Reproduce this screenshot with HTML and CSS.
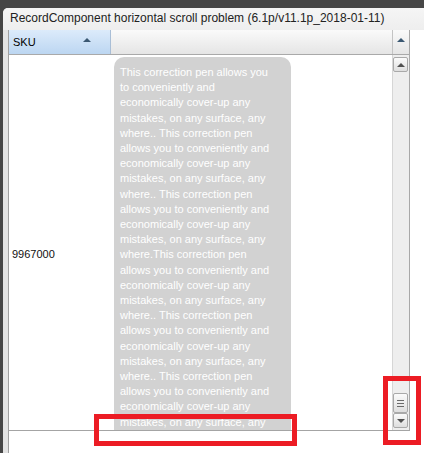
FILE: index.html
```html
<!DOCTYPE html>
<html>
<head>
<meta charset="utf-8">
<link rel="stylesheet" href="styles.css">
</head>
<body>
<div class="window">
  <div class="title">RecordComponent horizontal scroll problem (6.1p/v11.1p_2018-01-11)</div>
  <div class="content">
    <div class="pane">
      <div class="grid">
        <div class="header">
          <div class="hcell sku"><span class="hlabel">SKU</span><span class="sort"></span></div>
          <div class="hcell fill"></div>
          <div class="hcell corner"><span class="sort"></span></div>
        </div>
        <div class="bodywrap">
          <div class="body">
            <div class="row">
              <div class="cell skucell">9967000</div>
              <div class="cell desccell">
                <div class="bubble">This correction pen allows you to conveniently and economically cover-up any mistakes, on any surface, any where.. This correction pen allows you to conveniently and economically cover-up any mistakes, on any surface, any where.. This correction pen allows you to conveniently and economically cover-up any mistakes, on any surface, any where.This correction pen allows you to conveniently and economically cover-up any mistakes, on any surface, any where.. This correction pen allows you to conveniently and economically cover-up any mistakes, on any surface, any where.. This correction pen allows you to conveniently and economically cover-up any mistakes, on any surface, any where..</div>
              </div>
            </div>
          </div>
          <div class="vscroll">
            <div class="sbtn"><span class="tri-up"></span></div>
            <div class="track"></div>
            <div class="sbtn thumb"><span class="grip"></span><span class="grip"></span><span class="grip"></span></div>
            <div class="sbtn"><span class="tri-down"></span></div>
          </div>
        </div>
      </div>
    </div>
  </div>
</div>
<div class="mark mark-a"></div>
<div class="mark mark-b"></div>
</body>
</html>
```
FILE: styles.css
```css
html, body {
  margin: 0;
  padding: 0;
}
body {
  width: 424px;
  height: 453px;
  overflow: hidden;
  background: #464646;
  font-family: "Liberation Sans", Arial, sans-serif;
  position: relative;
}
.window {
  margin: 8px 0 0 3px;
  height: 445px;
  background: #e3e3e3;
  border-top-left-radius: 5px;
  display: flex;
  flex-direction: column;
  overflow: hidden;
}
.title {
  height: 22px;
  line-height: 20px;
  padding-left: 7px;
  font-size: 12px;
  color: #222222;
  background: linear-gradient(#f5f5f5, #eeeeee);
  white-space: nowrap;
  overflow: hidden;
}
.content {
  flex: 1;
  display: flex;
  padding-left: 5px;
  min-height: 0;
}
.pane {
  flex: 1;
  background: #ffffff;
  border-left: 1px solid #a0a0a0;
  min-height: 0;
}
.grid {
  width: 401px;
  box-sizing: border-box;
  border-right: 1px solid #a8a8a8;
  border-bottom: 1px solid #a4a4a4;
  display: flex;
  flex-direction: column;
}
.header {
  height: 25px;
  box-sizing: border-box;
  border-bottom: 1px solid #a9a9a9;
  display: flex;
}
.hcell {
  height: 24px;
  box-sizing: border-box;
  display: flex;
}
.sku {
  width: 102px;
  border-right: 1px solid #a9bed6;
  background: linear-gradient(#dcebfb, #bcd6f1);
  padding-left: 4px;
  font-size: 11px;
  color: #000;
  align-items: center;
}
.hlabel {
  line-height: 24px;
}
.sort {
  width: 0;
  height: 0;
  border-left: 4px solid transparent;
  border-right: 4px solid transparent;
  border-bottom: 4px solid #3b5872;
  align-self: flex-start;
  margin-top: 8px;
}
.sku .sort {
  margin-left: auto;
  margin-right: 19px;
}
.fill {
  flex: 1;
  background: linear-gradient(#fafafa, #e5e5e5);
}
.corner {
  width: 17px;
  border-left: 1px solid #c4c4c4;
  background: linear-gradient(#fafafa, #e5e5e5);
  justify-content: center;
}
.bodywrap {
  height: 375px;
  display: flex;
}
.body {
  flex: 1;
  overflow: hidden;
}
.row {
  display: flex;
}
.cell {
  box-sizing: border-box;
}
.skucell {
  width: 102px;
  padding-left: 3px;
  font-size: 11px;
  color: #111;
  display: flex;
  align-items: center;
}
.desccell {
  padding-left: 3px;
  padding-top: 2px;
  padding-bottom: 2px;
}
.bubble {
  width: 155px;
  padding: 8px 16px 6px 6px;
  background: #d2d2d2;
  border-radius: 10px;
  color: #ffffff;
  font-size: 11px;
  line-height: 15.2px;
}
.vscroll {
  width: 17px;
  box-sizing: border-box;
  border-left: 1px solid #d6d6d6;
  background: #eeeeee;
  padding: 2px 1px 2px 0;
  display: flex;
  flex-direction: column;
}
.sbtn {
  height: 15px;
  box-sizing: border-box;
  border: 1px solid #a9a9a9;
  border-radius: 2px;
  background: linear-gradient(#fbfbfb, #dedede);
  display: flex;
  flex-direction: column;
  align-items: center;
  justify-content: center;
}
.track {
  flex: 1;
}
.thumb {
  height: 20px;
  gap: 2px;
}
.grip {
  width: 7px;
  height: 1px;
  background: #6a6a6a;
}
.tri-up {
  width: 0;
  height: 0;
  border-left: 4px solid transparent;
  border-right: 4px solid transparent;
  border-bottom: 4px solid #505050;
}
.tri-down {
  width: 0;
  height: 0;
  border-left: 4px solid transparent;
  border-right: 4px solid transparent;
  border-top: 4px solid #505050;
}
.mark {
  position: absolute;
  box-sizing: border-box;
  border: 5px solid #ec1c24;
}
.mark-a {
  left: 94px;
  top: 414px;
  width: 203px;
  height: 32px;
}
.mark-b {
  left: 383px;
  top: 376px;
  width: 38px;
  height: 69px;
}
```
